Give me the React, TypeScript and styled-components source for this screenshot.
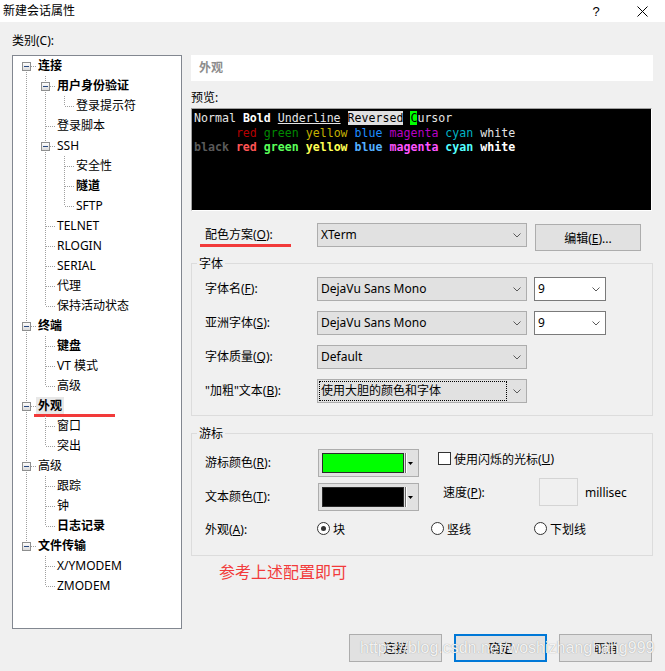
import React from 'react';
import styled, { createGlobalStyle, css } from 'styled-components';

const UI_FONT = `"Noto Sans", "Noto Sans CJK SC", sans-serif`;

const GlobalStyle = createGlobalStyle`
  html, body { margin: 0; padding: 0; }
  body {
    background: #f0f0f0;
    font-family: ${UI_FONT};
    font-size: 12px;
    color: #000;
  }
`;

/* ---------- window chrome ---------- */
const Window = styled.div`
  position: relative;
  width: 665px;
  height: 671px;
  background: #f0f0f0;
  overflow: hidden;
  display: flex;
  flex-direction: column;
`;

const TitleBar = styled.div`
  height: 22px;
  background: #fff;
  display: flex;
  align-items: center;
  padding-left: 3px;
`;

const TitleText = styled.div`
  flex: 1;
  line-height: 22px;
`;

const TitleButton = styled.div`
  width: 46px;
  height: 22px;
  display: flex;
  align-items: center;
  justify-content: center;
  font-family: "Liberation Sans", sans-serif;
  font-size: 13px;
`;

/* ---------- body layout ---------- */
const Body = styled.div`
  display: grid;
  grid-template-columns: 170px 462px;
  grid-template-rows: 22px 574px;
  column-gap: 9px;
  padding: 11px 0 0 12px;
`;

const CategoryLabel = styled.div`
  grid-column: 1 / 3;
  line-height: 16px;
  height: 16px;
`;

const Mn = styled.span`
  text-decoration: underline;
  text-underline-offset: 1px;
`;

/* ---------- tree ---------- */
const TreeBox = styled.div`
  box-sizing: border-box;
  border: 1px solid #828790;
  background: #fff;
  padding: 0 0 0 4px;
`;

const TreeRow = styled.div`
  position: relative;
  display: flex;
  align-items: center;
  height: 20px;
`;

const GuideSvg = styled.svg`
  display: block;
  flex: none;
`;

const TreeLabel = styled.span<{ $bold?: boolean; $selected?: boolean }>`
  padding: 0 2px;
  height: 18px;
  line-height: 18px;
  white-space: nowrap;
  font-weight: ${p => (p.$bold ? 700 : 400)};
  background: ${p => (p.$selected ? '#e8e8e8' : 'transparent')};
`;

const Annotation = styled.div<{ $left: number; $top: number; $width: number }>`
  position: absolute;
  left: ${p => p.$left}px;
  top: ${p => p.$top}px;
  width: ${p => p.$width}px;
  height: 3px;
  background: #f23a3a;
`;

type TNode = { label: string; bold?: boolean; selected?: boolean; children?: TNode[] };
type TRow = {
  label: string;
  bold?: boolean;
  selected?: boolean;
  depth: number;
  hasChildren: boolean;
  hasNext: boolean;
  firstRoot: boolean;
  pipes: boolean[];
};

const TREE: TNode[] = [
  {
    label: '连接',
    bold: true,
    children: [
      { label: '用户身份验证', bold: true, children: [{ label: '登录提示符' }] },
      { label: '登录脚本' },
      { label: 'SSH', children: [{ label: '安全性' }, { label: '隧道', bold: true }, { label: 'SFTP' }] },
      { label: 'TELNET' },
      { label: 'RLOGIN' },
      { label: 'SERIAL' },
      { label: '代理' },
      { label: '保持活动状态' },
    ],
  },
  { label: '终端', bold: true, children: [{ label: '键盘', bold: true }, { label: 'VT 模式' }, { label: '高级' }] },
  { label: '外观', bold: true, selected: true, children: [{ label: '窗口' }, { label: '突出' }] },
  { label: '高级', children: [{ label: '跟踪' }, { label: '钟' }, { label: '日志记录', bold: true }] },
  { label: '文件传输', bold: true, children: [{ label: 'X/YMODEM' }, { label: 'ZMODEM' }] },
];

function flatten(nodes: TNode[], depth: number, pipes: boolean[], out: TRow[]): TRow[] {
  nodes.forEach((n, i) => {
    const hasNext = i < nodes.length - 1;
    out.push({
      label: n.label,
      bold: n.bold,
      selected: n.selected,
      depth,
      hasChildren: !!n.children?.length,
      hasNext,
      firstRoot: depth === 0 && i === 0,
      pipes,
    });
    if (n.children) flatten(n.children, depth + 1, [...pipes, hasNext], out);
  });
  return out;
}

const DOT = { stroke: '#a0a0a0', strokeWidth: 1, strokeDasharray: '1 1' };

function PipeCell({ on }: { on: boolean }) {
  return (
    <GuideSvg width={19} height={20} viewBox="0 0 19 20">
      {on && <line x1={9.5} y1={0} x2={9.5} y2={20} {...DOT} />}
    </GuideSvg>
  );
}

function NodeCell({ row, id }: { row: TRow; id: string }) {
  return (
    <GuideSvg width={19} height={20} viewBox="0 0 19 20">
      {!row.firstRoot && <line x1={9.5} y1={0} x2={9.5} y2={10} {...DOT} />}
      {row.hasNext && <line x1={9.5} y1={10} x2={9.5} y2={20} {...DOT} />}
      <line x1={10} y1={10.5} x2={19} y2={10.5} {...DOT} />
      {row.hasChildren && (
        <>
          <defs>
            <linearGradient id={id} x1="0" y1="0" x2="0" y2="1">
              <stop offset="0" stopColor="#ffffff" />
              <stop offset="1" stopColor="#d8d8d8" />
            </linearGradient>
          </defs>
          <rect x={5.5} y={6.5} width={8} height={8} fill={`url(#${id})`} stroke="#8e8f8f" />
          <line x1={7} y1={10.5} x2={12} y2={10.5} stroke="#2b4a80" strokeWidth={1} />
        </>
      )}
    </GuideSvg>
  );
}

function Tree() {
  const rows = flatten(TREE, 0, [], []);
  return (
    <TreeBox>
      {rows.map((r, i) => (
        <TreeRow key={i}>
          {r.pipes.map((p, j) => (
            <PipeCell key={j} on={p} />
          ))}
          <NodeCell row={r} id={`tg${i}`} />
          <TreeLabel $bold={r.bold} $selected={r.selected}>
            {r.label}
          </TreeLabel>
          {r.selected && <Annotation $left={17} $top={18} $width={81} />}
        </TreeRow>
      ))}
    </TreeBox>
  );
}

/* ---------- right pane ---------- */
const Pane = styled.div`
  display: flex;
  flex-direction: column;
`;

const PaneHeader = styled.div`
  height: 26px;
  line-height: 26px;
  background: #fff;
  padding-left: 8px;
  color: #8c8c8c;
  font-weight: 700;
`;

const PreviewLabel = styled.div`
  margin-top: 8px;
  margin-bottom: 2px;
  height: 17px;
  line-height: 17px;
`;

const PreviewBox = styled.div`
  box-sizing: border-box;
  width: 461px;
  height: 103px;
  background: #000;
  border-top: 1px solid #a0a0a0;
  border-left: 1px solid #a0a0a0;
  border-right: 1px solid #fff;
  border-bottom: 1px solid #fff;
  padding: 2px 0 0 2px;
  font-family: "DejaVu Sans Mono", monospace;
  font-size: 11.6px;
  line-height: 14.5px;
  white-space: pre;
  color: #e5e5e5;
`;

const TermLine = styled.div`
  height: 14.5px;
`;

const T = styled.span<{ $c?: string; $b?: boolean; $bg?: string; $u?: boolean }>`
  color: ${p => p.$c || 'inherit'};
  font-weight: ${p => (p.$b ? 700 : 400)};
  background: ${p => p.$bg || 'transparent'};
  text-decoration: ${p => (p.$u ? 'underline' : 'none')};
`;

const SchemeRow = styled.div`
  margin-top: 12px;
  display: flex;
  align-items: flex-start;
`;

const FieldLabel = styled.div<{ $w: number }>`
  position: relative;
  box-sizing: border-box;
  width: ${p => p.$w}px;
  padding-left: 14px;
  height: 24px;
  line-height: 24px;
  white-space: nowrap;
  flex: none;
`;

const ComboBox = styled.div<{ $w: number; $white?: boolean }>`
  box-sizing: border-box;
  width: ${p => p.$w}px;
  height: 24px;
  flex: none;
  display: flex;
  align-items: center;
  padding: 0 5px 0 3px;
  border: 1px solid ${p => (p.$white ? '#7a7a7a' : '#adadad')};
  background: ${p => (p.$white ? '#fff' : '#e1e1e1')};
`;

const ComboText = styled.span<{ $focus?: boolean }>`
  flex: 1;
  white-space: nowrap;
  line-height: 20px;
  ${p =>
    p.$focus &&
    css`
      box-sizing: border-box;
      height: 20px;
      line-height: 18px;
      margin: 0 6px 0 -2px;
      padding-left: 1px;
      border: 1px dotted #000;
    `}
`;

const PushButton = styled.button<{ $w: number; $h: number; $primary?: boolean }>`
  box-sizing: border-box;
  width: ${p => p.$w}px;
  height: ${p => p.$h}px;
  padding: 0;
  flex: none;
  font-family: ${UI_FONT};
  font-size: 12px;
  color: #000;
  background: #e1e1e1;
  border: ${p => (p.$primary ? '2px solid #0078d7' : '1px solid #adadad')};
`;

const EditButton = styled(PushButton)`
  margin: 1px 0 0 8px;
`;

const Group = styled.fieldset<{ $mt: number; $pt: number; $pb: number }>`
  margin: ${p => p.$mt}px 0 0 0;
  min-width: 0;
  border: 1px solid #dcdcdc;
  padding: ${p => p.$pt}px 0 ${p => p.$pb}px 5px;
`;

const GroupLegend = styled.legend`
  padding: 0 2px;
  height: 17px;
  line-height: 17px;
`;

const FontGrid = styled.div`
  display: grid;
  grid-template-columns: 113px 210px 72px;
  column-gap: 7px;
  row-gap: 10px;
  align-items: center;
`;

const GridLabel = styled.div`
  padding-left: 8px;
  height: 24px;
  line-height: 24px;
  white-space: nowrap;
`;

const CursorTop = styled.div`
  display: flex;
`;

const ColorGrid = styled.div`
  display: grid;
  grid-template-columns: 121px 101px;
  row-gap: 6px;
  grid-auto-rows: 28px;
  align-items: center;
`;

const ColorLabel = styled.div`
  padding-left: 8px;
  line-height: 24px;
  white-space: nowrap;
`;

const ColorButton = styled.div`
  box-sizing: border-box;
  width: 101px;
  height: 28px;
  border: 1px solid #adadad;
  background: #e1e1e1;
  padding: 3px;
  display: flex;
  align-items: center;
`;

const Swatch = styled.div<{ $color: string }>`
  box-sizing: border-box;
  width: 82px;
  height: 20px;
  background: ${p => p.$color};
  border: 1px solid #2a2a2a;
`;

const SwatchSep = styled.div`
  margin-left: 1px;
  width: 1px;
  height: 20px;
  background: #6d6d6d;
  box-shadow: 1px 0 0 #fff;
`;

const SwatchArrow = styled.div`
  flex: 1;
  display: flex;
  align-items: center;
  justify-content: center;
`;

const CursorRight = styled.div`
  margin-left: 19px;
  display: flex;
  flex-direction: column;
`;

const BlinkRow = styled.label`
  margin-top: 3px;
  display: flex;
  align-items: center;
  height: 13px;
  white-space: nowrap;
`;

const CheckBox = styled.span`
  box-sizing: border-box;
  width: 13px;
  height: 13px;
  border: 1px solid #333;
  background: #fff;
  margin-right: 3px;
  flex: none;
`;

const SpeedRow = styled.div`
  margin-top: 13px;
  display: flex;
  align-items: center;
  height: 28px;
`;

const SpeedLabel = styled.div`
  box-sizing: border-box;
  width: 101px;
  padding-left: 5px;
  white-space: nowrap;
`;

const SpeedInput = styled.div`
  box-sizing: border-box;
  width: 39px;
  height: 28px;
  border: 1px solid #d4d4d4;
  background: #f0f0f0;
`;

const Unit = styled.span`
  margin-left: 7px;
`;

const RadioRow = styled.div`
  margin-top: 8px;
  height: 19px;
  display: flex;
  align-items: center;
`;

const RadioLabelCell = styled.div`
  box-sizing: border-box;
  width: 120px;
  padding-left: 8px;
  white-space: nowrap;
`;

const RadioItem = styled.label<{ $w?: number }>`
  display: flex;
  align-items: center;
  width: ${p => (p.$w ? `${p.$w}px` : 'auto')};
  white-space: nowrap;
`;

const RadioCircle = styled.span<{ $on?: boolean }>`
  box-sizing: border-box;
  width: 13px;
  height: 13px;
  border-radius: 50%;
  border: 1px solid #333;
  background: #fff;
  margin-right: 3px;
  display: flex;
  align-items: center;
  justify-content: center;
  flex: none;
  &::after {
    content: '';
    width: 5px;
    height: 5px;
    border-radius: 50%;
    background: ${p => (p.$on ? '#333' : 'transparent')};
  }
`;

const RedNote = styled.div`
  margin: 7px 0 0 28px;
  font-size: 16px;
  line-height: 18px;
  color: #f23a3a;
`;

/* ---------- footer ---------- */
const Footer = styled.div`
  margin-top: 5px;
  display: flex;
  justify-content: flex-end;
  gap: 12px;
  padding-right: 13px;
`;

const Watermark = styled.div`
  position: absolute;
  left: 360px;
  top: 638px;
  font-family: "Liberation Sans", Arial, sans-serif;
  font-size: 16px;
  line-height: 20px;
  color: rgba(255, 255, 255, 0.9);
  text-shadow: 0 0 1px rgba(120, 120, 120, 0.8);
  white-space: nowrap;
  pointer-events: none;
`;

function Chevron() {
  return (
    <svg width="8" height="5" viewBox="0 0 8 5">
      <polyline points="0.5,0.5 4,4 7.5,0.5" fill="none" stroke="#5a5a5a" strokeWidth="1" />
    </svg>
  );
}

function Combo({ w, text, white, focus }: { w: number; text: string; white?: boolean; focus?: boolean }) {
  return (
    <ComboBox $w={w} $white={white}>
      <ComboText $focus={focus}>{text}</ComboText>
      <Chevron />
    </ComboBox>
  );
}

function ColorPick({ color }: { color: string }) {
  return (
    <ColorButton>
      <Swatch $color={color} />
      <SwatchSep />
      <SwatchArrow>
        <svg width="5" height="3" viewBox="0 0 5 3">
          <polygon points="0,0 5,0 2.5,3" fill="#000" />
        </svg>
      </SwatchArrow>
    </ColorButton>
  );
}

const N = { red: '#b40000', green: '#008a00', yellow: '#c4b000', blue: '#1e8cff', magenta: '#b800c4', cyan: '#00b4c4', white: '#e4e4e4' };
const B = { black: '#5a5a5a', red: '#ff5454', green: '#5aff5a', yellow: '#ffff54', blue: '#54b0ff', magenta: '#ff54ff', cyan: '#54ffff', white: '#ffffff' };

export default function App() {
  return (
    <Window>
      <GlobalStyle />
      <TitleBar>
        <TitleText>新建会话属性</TitleText>
        <TitleButton>?</TitleButton>
        <TitleButton>
          <svg width="11" height="11" viewBox="0 0 11 11">
            <line x1="0.5" y1="0.5" x2="10.5" y2="10.5" stroke="#000" strokeWidth="1" />
            <line x1="10.5" y1="0.5" x2="0.5" y2="10.5" stroke="#000" strokeWidth="1" />
          </svg>
        </TitleButton>
      </TitleBar>

      <Body>
        <CategoryLabel>类别(C):</CategoryLabel>
        <Tree />
        <Pane>
          <PaneHeader>外观</PaneHeader>
          <PreviewLabel>预览:</PreviewLabel>
          <PreviewBox>
            <TermLine>
              Normal <T $b $c="#fff">Bold</T> <T $u>Underline</T> <T $bg="#e0e0e0" $c="#000">Reversed</T>{' '}
              <T $bg="#00ff00" $c="#000">C</T>ursor
            </TermLine>
            <TermLine>
              {'      '}
              <T $c={N.red}>red</T> <T $c={N.green}>green</T> <T $c={N.yellow}>yellow</T> <T $c={N.blue}>blue</T>{' '}
              <T $c={N.magenta}>magenta</T> <T $c={N.cyan}>cyan</T> <T $c={N.white}>white</T>
            </TermLine>
            <TermLine>
              <T $b $c={B.black}>black</T> <T $b $c={B.red}>red</T> <T $b $c={B.green}>green</T>{' '}
              <T $b $c={B.yellow}>yellow</T> <T $b $c={B.blue}>blue</T> <T $b $c={B.magenta}>magenta</T>{' '}
              <T $b $c={B.cyan}>cyan</T> <T $b $c={B.white}>white</T>
            </TermLine>
          </PreviewBox>

          <SchemeRow>
            <FieldLabel $w={126}>
              配色方案(<Mn>O</Mn>):
              <Annotation $left={9} $top={21} $width={91} />
            </FieldLabel>
            <Combo w={210} text="XTerm" />
            <EditButton $w={106} $h={27}>
              编辑(<Mn>E</Mn>)...
            </EditButton>
          </SchemeRow>

          <Group $mt={4} $pt={5} $pb={12}>
            <GroupLegend>字体</GroupLegend>
            <FontGrid>
              <GridLabel>
                字体名(<Mn>F</Mn>):
              </GridLabel>
              <Combo w={210} text="DejaVu Sans Mono" />
              <Combo w={72} text="9" white />
              <GridLabel>
                亚洲字体(<Mn>S</Mn>):
              </GridLabel>
              <Combo w={210} text="DejaVu Sans Mono" />
              <Combo w={72} text="9" white />
              <GridLabel>
                字体质量(<Mn>Q</Mn>):
              </GridLabel>
              <Combo w={210} text="Default" />
              <span />
              <GridLabel>
                "加粗"文本(<Mn>B</Mn>):
              </GridLabel>
              <Combo w={210} text="使用大胆的颜色和字体" focus />
              <span />
            </FontGrid>
          </Group>

          <Group $mt={9} $pt={7} $pb={17}>
            <GroupLegend>游标</GroupLegend>
            <CursorTop>
              <ColorGrid>
                <ColorLabel>
                  游标颜色(<Mn>R</Mn>):
                </ColorLabel>
                <ColorPick color="#00ff00" />
                <ColorLabel>
                  文本颜色(<Mn>T</Mn>):
                </ColorLabel>
                <ColorPick color="#000000" />
              </ColorGrid>
              <CursorRight>
                <BlinkRow>
                  <CheckBox />
                  使用闪烁的光标(<Mn>U</Mn>)
                </BlinkRow>
                <SpeedRow>
                  <SpeedLabel>
                    速度(<Mn>P</Mn>):
                  </SpeedLabel>
                  <SpeedInput />
                  <Unit>millisec</Unit>
                </SpeedRow>
              </CursorRight>
            </CursorTop>
            <RadioRow>
              <RadioLabelCell>
                外观(<Mn>A</Mn>):
              </RadioLabelCell>
              <RadioItem $w={114}>
                <RadioCircle $on />块
              </RadioItem>
              <RadioItem $w={103}>
                <RadioCircle />竖线
              </RadioItem>
              <RadioItem>
                <RadioCircle />下划线
              </RadioItem>
            </RadioRow>
          </Group>

          <RedNote>参考上述配置即可</RedNote>
        </Pane>
      </Body>

      <Footer>
        <PushButton $w={93} $h={28}>连接</PushButton>
        <PushButton $w={93} $h={28} $primary>确定</PushButton>
        <PushButton $w={93} $h={28}>取消</PushButton>
      </Footer>
      <Watermark>https://blog.csdn.net/woshizhanghang999</Watermark>
    </Window>
  );
}
